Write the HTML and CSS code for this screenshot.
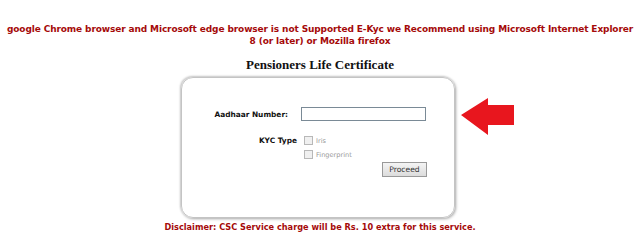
FILE: index.html
```html
<!DOCTYPE html>
<html>
<head>
<meta charset="utf-8">
<link rel="stylesheet" href="styles.css">
</head>
<body>
<div class="page">
  <p class="warn">google Chrome browser and Microsoft edge browser is not Supported E-Kyc we Recommend using Microsoft Internet Explorer 8 (or later) or Mozilla firefox</p>
  <h1 class="title">Pensioners Life Certificate</h1>
  <div class="stage">
    <div class="card">
      <div class="row aadhaar">
        <label class="lbl">Aadhaar Number:</label>
        <span class="input"></span>
      </div>
      <div class="row kyc">
        <span class="lbl">KYC Type</span>
        <div class="opts">
          <div class="opt"><span class="cb"></span><span class="otext">Iris</span></div>
          <div class="opt"><span class="cb"></span><span class="otext">Fingerprint</span></div>
        </div>
      </div>
      <div class="btnrow"><span class="btn">Proceed</span></div>
    </div>
    <svg class="arrow" width="54" height="40" viewBox="0 0 54 40">
      <polygon points="0,17 27,0 27,7 53,7 53,27 27,27 27,37" fill="#e8161e"/>
    </svg>
  </div>
  <p class="disc">Disclaimer: CSC Service charge will be Rs. 10 extra for this service.</p>
</div>
</body>
</html>
```
FILE: styles.css
```css
html, body { margin: 0; padding: 0; background: #fff; }
.page { width: 640px; height: 242px; overflow: hidden; }
.warn {
  width: 628px;
  margin: 0 auto; padding-top: 23px;
  text-align: center;
  font-family: "DejaVu Sans", Verdana, sans-serif;
  font-weight: bold; font-size: 9px; line-height: 12px;
  color: #a50a0a;
  letter-spacing: -0.12px;
}
.title {
  margin: 11px 0 0 0;
  text-align: center;
  font-family: "Liberation Serif", "Times New Roman", serif;
  font-size: 13px; line-height: 14px; font-weight: bold; color: #111;
}
.stage { position: relative; padding-top: 5px; }
.card {
  margin-left: 181px;
  width: 272px; height: 139px;
  border: 1px solid #c4c4c4; border-radius: 12px;
  box-shadow: -1px -1px 2px #c8c8c8, 1px 1px 3px #a8a8a8;
  font-family: "DejaVu Sans", Verdana, sans-serif;
  font-size: 7.4px;
  overflow: hidden;
}
.row { display: flex; }
.aadhaar { margin-top: 29px; align-items: center; }
.aadhaar .lbl { width: 106px; text-align: right; font-weight: bold; color: #111; }
.input {
  margin-left: 13px; width: 123px; height: 12px;
  border: 1px solid #7a8a96; background: #fff;
}
.kyc { margin-top: 15px; }
.kyc .lbl { width: 115px; text-align: right; font-weight: bold; color: #111; }
.opts { margin-left: 7px; display: flex; flex-direction: column; gap: 5px; }
.opt { display: flex; align-items: center; }
.cb { width: 7px; height: 7px; border: 1px solid #b8b8b8; background: #f0f0f0; }
.otext { margin-left: 3px; color: #999; font-size: 6.6px; }
.btnrow { display: flex; justify-content: flex-end; padding-right: 27px; margin-top: 3px; }
.btn {
  width: 43px; height: 13px; line-height: 13px; text-align: center;
  border: 1px solid #999; background: linear-gradient(#f4f4f4, #dcdcdc);
  color: #333; font-size: 7.6px;
}
.arrow { position: absolute; left: 461px; top: 26px; }
.disc {
  margin: 3px 0 0 0;
  text-align: center;
  font-family: "DejaVu Sans", Verdana, sans-serif;
  font-weight: bold; font-size: 8.2px; line-height: 12px;
  color: #a50a0a;
}
```
